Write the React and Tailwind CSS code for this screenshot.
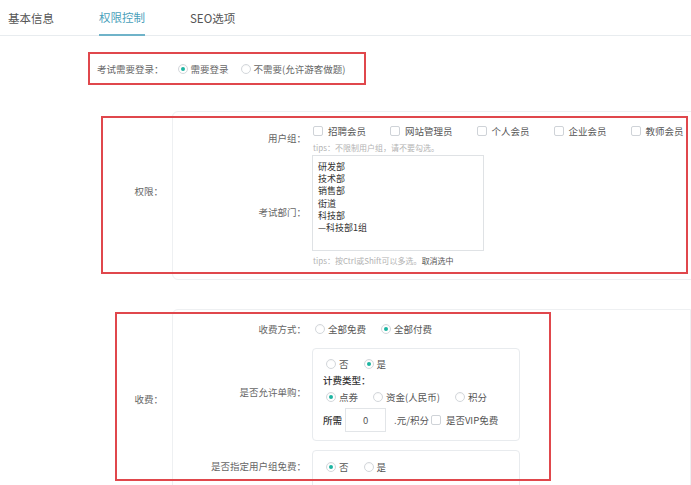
import React from "react";

const Radio = ({ checked }) => (
  <span className="ml-[3px] w-[10px] h-[10px] rounded-full border border-[#d3d7db] bg-white flex items-center justify-center shrink-0 shadow-[inset_0_1px_1px_rgba(0,0,0,0.04)]">
    {checked && <span className="w-[4px] h-[4px] rounded-full bg-[#1db4a1]" />}
  </span>
);

const RadioItem = ({ checked, children, className = "" }) => (
  <span className={"flex items-center gap-[3px] " + className}>
    <Radio checked={checked} />
    <span className="whitespace-nowrap">{children}</span>
  </span>
);

const Checkbox = ({ className = "" }) => (
  <span className={"w-[10px] h-[10px] rounded-[2px] border border-[#cfd3d8] bg-white shrink-0 " + className} />
);

const CheckItem = ({ children }) => (
  <span className="flex items-center gap-[5px] mr-[24px] whitespace-nowrap">
    <Checkbox />
    <span>{children}</span>
  </span>
);

export default function App() {
  const font = { fontFamily: '"Noto Sans CJK SC", "Noto Sans", sans-serif' };
  return (
    <div
      className="w-[691px] h-[485px] overflow-hidden bg-white relative text-[9.5px] text-[#666] leading-[12px]"
      style={font}
    >
      {/* Tabs */}
      <div className="h-[36px] border-b border-[#e8ecef] flex pl-[8px] gap-[45px] text-[11.5px]">
        <div className="h-[36px] flex items-center text-[#555]">基本信息</div>
        <div className="h-[36px] flex items-center text-[#4a9fbb] border-b-2 border-[#6fb3c9] -mb-px">权限控制</div>
        <div className="h-[36px] flex items-center text-[#555]">SEO选项</div>
      </div>

      {/* Row 1 */}
      <div className="mt-[16px] ml-[88px] w-[278px] h-[33px] border-2 border-[#e0474c] flex items-center pl-[7px]">
        <span className="whitespace-nowrap">考试需要登录：</span>
        <RadioItem checked className="ml-[11px]">需要登录</RadioItem>
        <RadioItem className="ml-[9px]">不需要(允许游客做题)</RadioItem>
      </div>

      {/* Section 1 */}
      <div className="relative mt-[26px] flex">
        <div className="w-[172px] shrink-0 text-right pr-[9px] pt-[74px]">权限：</div>
        <div className="w-[520px] h-[169px] border border-[#eef0f2] rounded-tl-[6px] rounded-bl-[6px] pt-[13px]">
          <div className="flex">
            <div className="w-[133px] shrink-0 text-right mt-[7px] h-[12px]">用户组：</div>
            <div className="ml-[6px]">
              <div className="flex items-center h-[12px] pl-[1px] text-[#555]">
                <CheckItem>招聘会员</CheckItem>
                <CheckItem>网站管理员</CheckItem>
                <CheckItem>个人会员</CheckItem>
                <CheckItem>企业会员</CheckItem>
                <CheckItem>教师会员</CheckItem>
              </div>
              <div className="mt-[5px] h-[12px] text-[8px] text-[#b3b3b3] pl-[1px] whitespace-nowrap">
                tips：不限制用户组，请不要勾选。
              </div>
            </div>
          </div>
          <div className="flex">
            <div className="w-[133px] shrink-0 text-right mt-[52px] h-[12px]">考试部门：</div>
            <div className="ml-[6px]">
              <div className="mt-[1px] w-[172px] h-[96px] border border-[#dfe2e5] pt-[5px] pl-[5px] text-[#333] text-[9px] leading-[12.2px]">
                <div>研发部</div>
                <div>技术部</div>
                <div>销售部</div>
                <div>街道</div>
                <div>科技部</div>
                <div>—科技部1组</div>
              </div>
              <div className="mt-[4px] h-[12px] text-[8px] text-[#b3b3b3] pl-[1px] whitespace-nowrap">
                tips：按Ctrl或Shift可以多选。<span className="text-[#555]">取消选中</span>
              </div>
            </div>
          </div>
        </div>
        <div className="absolute left-[101px] top-[5px] w-[587px] h-[158px] border-2 border-[#e0474c] pointer-events-none" />
      </div>

      {/* Section 2 */}
      <div className="relative mt-[29px] flex">
        <div className="w-[172px] shrink-0 text-right pr-[9px] pt-[84px]">收费：</div>
        <div className="w-[520px] h-[200px] border border-[#eef0f2] rounded-tl-[6px] pt-[13px]">
          <div className="flex h-[12px] items-center">
            <div className="w-[133px] shrink-0 text-right">收费方式：</div>
            <div className="ml-[6px] flex items-center text-[#555]">
              <RadioItem>全部免费</RadioItem>
              <RadioItem checked className="ml-[12px]">全部付费</RadioItem>
            </div>
          </div>
          <div className="flex mt-[13px]">
            <div className="w-[133px] shrink-0 text-right mt-[38px] h-[12px]">是否允许单购：</div>
            <div className="ml-[6px] w-[208px] h-[93px] border border-[#e8ebee] rounded-[4px] pt-[9px] pl-[10px] text-[#555]">
              <div className="flex items-center h-[12px]">
                <RadioItem>否</RadioItem>
                <RadioItem checked className="ml-[12px]">是</RadioItem>
              </div>
              <div className="mt-[4px] h-[12px] text-[#333] font-medium">计费类型：</div>
              <div className="mt-[5px] flex items-center h-[12px]">
                <RadioItem checked>点券</RadioItem>
                <RadioItem className="ml-[12px]">资金(人民币)</RadioItem>
                <RadioItem className="ml-[12px]">积分</RadioItem>
              </div>
              <div className="mt-[5px] flex items-center h-[24px]">
                <span className="text-[#333] font-medium">所需</span>
                <span className="ml-[3px] w-[41px] h-[24px] border border-[#e2e5e8] flex items-center justify-center text-[#555]">0</span>
                <span className="ml-[8px]">.元/积分</span>
                <Checkbox className="ml-[2px]" />
                <span className="ml-[5px]">是否VIP免费</span>
              </div>
            </div>
          </div>
          <div className="flex mt-[9px]">
            <div className="w-[133px] shrink-0 text-right mt-[10px] h-[12px]">是否指定用户组免费：</div>
            <div className="ml-[6px] w-[208px] h-[60px] border border-[#e8ebee] rounded-[4px] pt-[10px] pl-[10px] text-[#555]">
              <div className="flex items-center h-[12px]">
                <RadioItem checked>否</RadioItem>
                <RadioItem className="ml-[12px]">是</RadioItem>
              </div>
            </div>
          </div>
        </div>
        <div className="absolute left-[115px] top-[3px] w-[436px] h-[169px] border-2 border-[#e0474c] pointer-events-none" />
      </div>
    </div>
  );
}
